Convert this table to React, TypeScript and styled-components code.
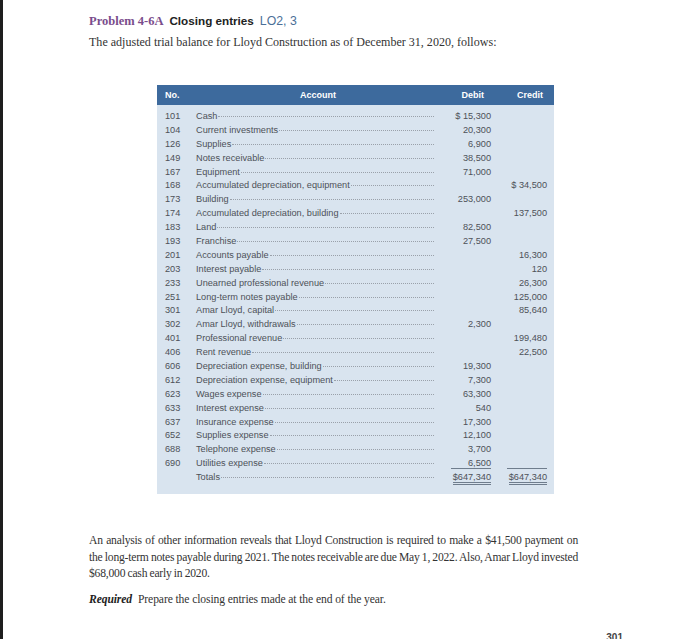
import React from "react";
import styled, { createGlobalStyle } from "styled-components";

const Global = createGlobalStyle`
  html, body { margin: 0; padding: 0; background: #ffffff; }
  body {
    border-left: 3px solid #1e1e1e;
    height: 639px;
    box-sizing: border-box;
    overflow: hidden;
  }
`;

const Page = styled.div`
  padding: 13px 0 0 86px;
  font-family: "Liberation Serif", "DejaVu Serif", serif;
  color: #2e2e2e;
`;

const TitleLine = styled.div`
  display: flex;
  align-items: baseline;
  gap: 6px;
  line-height: 16px;
  height: 16px;
`;

const ProblemNo = styled.span`
  font-family: "Liberation Serif", serif;
  font-weight: bold;
  font-size: 12.5px;
  color: #7a4d8c;
`;

const ProblemName = styled.span`
  font-family: "Liberation Sans", Arial, sans-serif;
  font-weight: bold;
  font-size: 11.7px;
  color: #222;
`;

const LO = styled.span`
  font-family: "Liberation Sans", Arial, sans-serif;
  font-size: 12.3px;
  color: #4b6f98;
`;

const Intro = styled.p`
  margin: 5px 0 0;
  font-size: 12.05px;
  line-height: 16px;
  color: #333;
`;

const Table = styled.div`
  margin: 35px 0 0 68px;
  width: 397px;
  background: #d9e4ef;
  font-family: "Liberation Sans", Arial, sans-serif;
  font-size: 9.2px;
  color: #4d5158;
  padding-bottom: 9px;
`;

const Grid = `
  display: grid;
  grid-template-columns: 31px 244px 51px 56px;
  padding: 0 7px 0 8px;
  align-items: center;
`;

const HeadRow = styled.div`
  ${Grid}
  height: 20px;
  background: #3d6a9d;
  color: #ffffff;
  font-weight: bold;
  font-size: 9px;
`;

const HeadCell = styled.div<{ $align: "left" | "center" | "right"; $pr?: number }>`
  text-align: ${(p) => p.$align};
  padding-right: ${(p) => p.$pr ?? 0}px;
`;

const Body = styled.div`
  display: grid;
  grid-auto-rows: 13.9px;
  padding-top: 5px;
`;

const Row = styled.div`
  ${Grid}
  line-height: 13.9px;
`;

const NoCell = styled.div``;

const AccountCell = styled.div`
  display: flex;
  align-items: baseline;
  padding-right: 6px;
  white-space: nowrap;
`;

const Leader = styled.span`
  flex: 1;
  margin-left: 1px;
  border-bottom: 1px dotted #9aa1aa;
  transform: translateY(-2px);
`;

const Amount = styled.div`
  text-align: right;
  white-space: pre;
`;

const Underlined = styled.span`
  display: inline-block;
  border-bottom: 1px solid #6f7d8d;
  line-height: 10px;
  min-width: 40px;
  text-align: right;
`;

const Total = styled.span`
  display: inline-block;
  line-height: 10px;
  border-bottom: 3px double #6f7d8d;
`;

const Para = styled.div`
  margin: 39px 0 0;
  width: 489px;
  font-size: 11.6px;
  letter-spacing: -0.2px;
  word-spacing: -0.5px;
  line-height: 16.5px;
  color: #333;
`;

const Line = styled.div<{ $justify?: boolean }>`
  white-space: nowrap;
  text-align: ${(p) => (p.$justify ? "justify" : "left")};
  text-align-last: ${(p) => (p.$justify ? "justify" : "left")};
`;

const Required = styled.p`
  margin: 9px 0 0;
  font-size: 11.6px;
  letter-spacing: -0.1px;
  line-height: 16.5px;
  color: #333;
`;

const ReqLabel = styled.strong`
  font-style: italic;
  margin-right: 6px;
  color: #222;
`;

const PageNum = styled.div`
  width: 534px;
  margin-top: 24px;
  text-align: right;
  font-family: "Liberation Sans", Arial, sans-serif;
  font-weight: bold;
  font-size: 10px;
  line-height: 12px;
  color: #444;
`;

type R = { no: string; name: string; debit?: string; credit?: string };

const rows: R[] = [
  { no: "101", name: "Cash", debit: "$ 15,300" },
  { no: "104", name: "Current investments", debit: "20,300" },
  { no: "126", name: "Supplies", debit: "6,900" },
  { no: "149", name: "Notes receivable", debit: "38,500" },
  { no: "167", name: "Equipment", debit: "71,000" },
  { no: "168", name: "Accumulated depreciation, equipment", credit: "$ 34,500" },
  { no: "173", name: "Building", debit: "253,000" },
  { no: "174", name: "Accumulated depreciation, building", credit: "137,500" },
  { no: "183", name: "Land", debit: "82,500" },
  { no: "193", name: "Franchise", debit: "27,500" },
  { no: "201", name: "Accounts payable", credit: "16,300" },
  { no: "203", name: "Interest payable", credit: "120" },
  { no: "233", name: "Unearned professional revenue", credit: "26,300" },
  { no: "251", name: "Long-term notes payable", credit: "125,000" },
  { no: "301", name: "Amar Lloyd, capital", credit: "85,640" },
  { no: "302", name: "Amar Lloyd, withdrawals", debit: "2,300" },
  { no: "401", name: "Professional revenue", credit: "199,480" },
  { no: "406", name: "Rent revenue", credit: "22,500" },
  { no: "606", name: "Depreciation expense, building", debit: "19,300" },
  { no: "612", name: "Depreciation expense, equipment", debit: "7,300" },
  { no: "623", name: "Wages expense", debit: "63,300" },
  { no: "633", name: "Interest expense", debit: "540" },
  { no: "637", name: "Insurance expense", debit: "17,300" },
  { no: "652", name: "Supplies expense", debit: "12,100" },
  { no: "688", name: "Telephone expense", debit: "3,700" },
];

export default function App() {
  return (
    <>
      <Global />
      <Page>
        <TitleLine>
          <ProblemNo>Problem 4-6A</ProblemNo>
          <ProblemName>Closing entries</ProblemName>
          <LO>LO2, 3</LO>
        </TitleLine>
        <Intro>
          The adjusted trial balance for Lloyd Construction as of December 31, 2020, follows:
        </Intro>

        <Table>
          <HeadRow>
            <HeadCell $align="left">No.</HeadCell>
            <HeadCell $align="center">Account</HeadCell>
            <HeadCell $align="right" $pr={7}>Debit</HeadCell>
            <HeadCell $align="right" $pr={4}>Credit</HeadCell>
          </HeadRow>
          <Body>
            {rows.map((r) => (
              <Row key={r.no}>
                <NoCell>{r.no}</NoCell>
                <AccountCell>
                  {r.name}
                  <Leader />
                </AccountCell>
                <Amount>{r.debit ?? ""}</Amount>
                <Amount>{r.credit ?? ""}</Amount>
              </Row>
            ))}
            <Row>
              <NoCell>690</NoCell>
              <AccountCell>
                Utilities expense
                <Leader />
              </AccountCell>
              <Amount>
                <Underlined>6,500</Underlined>
              </Amount>
              <Amount>
                <Underlined>{"\u00a0"}</Underlined>
              </Amount>
            </Row>
            <Row>
              <NoCell />
              <AccountCell>
                Totals
                <Leader />
              </AccountCell>
              <Amount>
                <Total>$647,340</Total>
              </Amount>
              <Amount>
                <Total>$647,340</Total>
              </Amount>
            </Row>
          </Body>
        </Table>

        <Para>
          <Line $justify>
            An analysis of other information reveals that Lloyd Construction is required to make a $41,500 payment on
          </Line>
          <Line $justify>
            the long-term notes payable during 2021. The notes receivable are due May 1, 2022. Also, Amar Lloyd invested
          </Line>
          <Line>$68,000 cash early in 2020.</Line>
        </Para>
        <Required>
          <ReqLabel>Required</ReqLabel>
          Prepare the closing entries made at the end of the year.
        </Required>
        <PageNum>301</PageNum>
      </Page>
    </>
  );
}
